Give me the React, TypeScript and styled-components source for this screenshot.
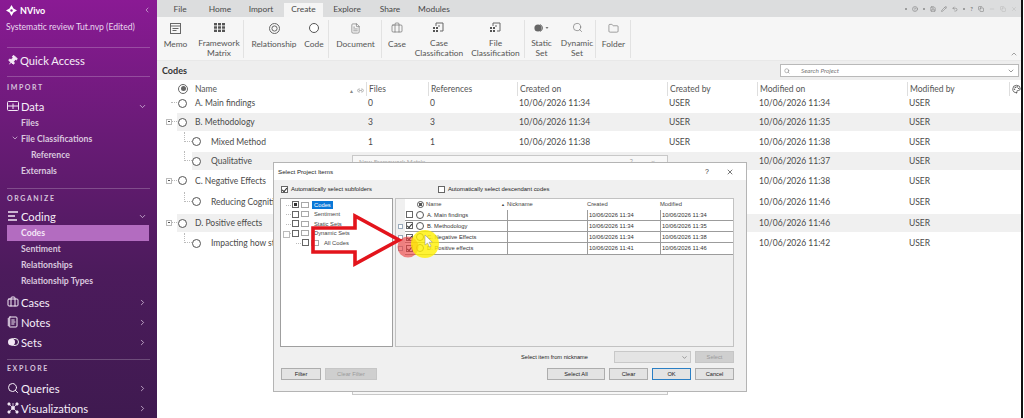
import React from 'react';
import styled, { createGlobalStyle } from 'styled-components';
import { Pin, Briefcase, ChevronDown, ChevronRight, ChevronLeft, ChevronUp, Search, FileText, Folder, X, Minus, Copy, HelpCircle, Save, Undo2, Pencil, Palette, NotebookText, Link2 } from 'lucide-react';

const Global = createGlobalStyle`
  html, body { margin: 0; padding: 0; width: 1024px; height: 418px; overflow: hidden; background: #fff; }
  body { font-family: Lato, "Open Sans", sans-serif; color: #444; }
  * { box-sizing: border-box; }
`;

const Page = styled.div`
  position: relative; width: 1024px; height: 418px; display: flex; overflow: hidden; background: #fff;
`;

/* ---------- sidebar ---------- */
const Sidebar = styled.aside`
  width: 157px; height: 418px; flex: none; color: #f3e8f5; overflow: hidden;
  background: linear-gradient(180deg, #8a1a94 0%, #6b1b78 30%, #4c1b5c 65%, #3f1a50 100%);
`;
const Brand = styled.div`
  height: 20px; padding: 0 6px; display: flex; align-items: center; gap: 3px;
  font-size: 9px; font-weight: 700; color: #fff;
`;
const BrandCollapse = styled.span` margin-left: auto; display: flex; color: #d9bfe0; `;
const ProjectName = styled.div`
  height: 14px; padding-left: 6px; font-size: 8.6px; line-height: 14px; white-space: nowrap; color: #e9d8ee;
`;
const Sep = styled.div<{ $mt: number }>`
  height: 1px; margin: ${p => p.$mt}px 7px 0; background: rgba(255,255,255,.22);
`;
const SectionLabel = styled.div<{ $h: number }>`
  height: ${p => p.$h}px; line-height: ${p => p.$h}px; padding-left: 7px;
  font-size: 7px; letter-spacing: 1.6px; font-weight: 700; color: #d6c3dc;
`;
const NavMain = styled.div<{ $h?: number; $mt?: number }>`
  height: ${p => p.$h ?? 20}px; margin-top: ${p => p.$mt ?? 0}px; padding: 0 10px 0 7px;
  display: flex; align-items: center; gap: 2px; font-size: 11.2px; color: #f6eef8;
  svg { flex: none; }
`;
const NavArrow = styled.span` margin-left: auto; display: flex; color: #dcc7e2; `;
const NavSub = styled.div<{ $indent?: number; $active?: boolean }>`
  height: 16px; line-height: 16px; margin: 0 8px 0 7px; padding-left: ${p => p.$indent ?? 14}px;
  font-size: 8.7px; font-weight: 700; position: relative; white-space: nowrap;
  color: ${p => (p.$active ? '#f4e6f7' : '#d9c7de')};
  background: ${p => (p.$active ? '#b36cc0' : 'transparent')};
`;
const SubCaret = styled.span` position: absolute; left: 4px; top: 3px; display: flex; color: #e6d6ea; `;

/* ---------- main ---------- */
const Main = styled.main` flex: 1; min-width: 0; margin-right: 1px; display: flex; flex-direction: column; border-right: 2px solid #111; `;
const TabBar = styled.div`
  height: 17px; background: #dcddde; display: flex; align-items: flex-end; padding-left: 1px; position: relative;
`;
const Tab = styled.div<{ $w: number; $active?: boolean }>`
  width: ${p => p.$w}px; height: 14px; line-height: 13px; text-align: center; font-size: 8.4px; color: #4a4a4a;
  background: ${p => (p.$active ? '#f5f5f5' : 'transparent')};
`;
const QuickTools = styled.div`
  margin-left: auto; height: 17px; display: flex; align-items: center; gap: 5px; padding-right: 4px; color: #777;
`;
const QuickDot = styled.span` width: 2px; height: 2px; background: #888; border-radius: 50%; `;
const QuickText = styled.span` font-size: 6px; color: #666; `;
const Ribbon = styled.div`
  height: 44px; background: #f6f6f6; display: flex; padding-top: 3px; position: relative; border-bottom: 1px solid #e8e8e8;
`;
const RibbonGroup = styled.div<{ $w: number }>`
  width: ${p => p.$w}px; height: 38px; display: flex; flex: none; border-right: 1px solid #e2e2e2;
`;
const RibbonItem = styled.div<{ $w: number }>`
  width: ${p => p.$w}px; display: flex; flex-direction: column; align-items: center; flex: none; color: #666;
`;
const RibbonIcon = styled.div` height: 16px; display: flex; align-items: center; justify-content: center; `;
const RibbonLabel = styled.div`
  margin-top: 3px; font-size: 8.4px; line-height: 10px; text-align: center; color: #555; white-space: nowrap;
`;
const RibbonCollapse = styled.span` position: absolute; right: 3px; bottom: 2px; display: flex; color: #777; `;
const TitleBar = styled.div`
  height: 19px; background: #eeeeee; display: flex; align-items: center; justify-content: space-between;
  padding: 0 2px 0 5px; font-size: 9px; font-weight: 700; color: #333;
`;
const SearchBox = styled.div`
  width: 239px; height: 13px; border: 1px solid #b9b9b9; background: #fff; display: flex; align-items: center;
  padding: 0 3px; font-size: 6.4px; font-weight: 400; font-style: italic; color: #777;
`;
const SearchText = styled.span` margin-left: 11px; `;
const SearchChevron = styled.span` margin-left: auto; display: flex; color: #666; `;

const Head = styled.div`
  height: 17px; background: #fff; display: grid; position: relative; align-items: center;
  grid-template-columns: 209px 62px 89px 150px 90px 150px 1fr 12px; font-size: 8.5px; color: #555;
`;
const HeadCell = styled.div<{ $first?: boolean }>`
  height: 14px; line-height: 14px; padding-left: ${p => (p.$first ? 38 : 2)}px; border-left: ${p => (p.$first ? 0 : 1)}px solid #dedede;
  display: flex; align-items: center; position: relative;
`;
const HeadAdd = styled.span`
  position: absolute; left: 21px; top: 2px; width: 10px; height: 10px; border: 1px solid #666; border-radius: 50%;
  &::after { content: ''; position: absolute; left: 1.5px; top: 1.5px; width: 5px; height: 5px; border-radius: 50%; background: #666; }
`;
const HeadSort = styled.span`
  position: absolute; right: 2px; top: 2px; display: flex; align-items: center; gap: 3px; font-size: 5px; color: #888;
`;
const Row = styled.div<{ $h: number; $left: number; $band?: boolean; $mt?: number }>`
  height: ${p => p.$h}px; margin-top: ${p => p.$mt ?? 0}px; margin-left: ${p => p.$left - 157}px;
  display: grid; align-items: center; position: relative; font-size: 8.5px; color: #4a4a4a;
  grid-template-columns: ${p => 368 - p.$left}px 62px 89px 150px 90px 150px 1fr;
  background: ${p => (p.$band ? '#f0f0f0' : 'transparent')};
`;
const NameCell = styled.div<{ $child?: boolean }>`
  display: flex; align-items: center; gap: ${p => (p.$child ? 10 : 8)}px; padding-left: ${p => (p.$child ? 0 : 1)}px; white-space: nowrap; overflow: hidden;
`;
const NodeCircle = styled.span<{ $s?: number }>`
  width: ${p => p.$s ?? 9}px; height: ${p => p.$s ?? 9}px; border-radius: 50%; flex: none; border: 1.4px solid #555; background: #fff;
`;
const TreeStem = styled.span<{ $x: number; $w: number; $tall?: boolean }>`
  position: absolute; left: ${p => p.$x}px; bottom: 50%; width: ${p => p.$w}px; height: ${p => (p.$tall ? 10 : 1)}px;
  border-bottom: 1px dotted #bbb; border-left: ${p => (p.$tall ? '1px dotted #bbb' : '0')};
`;
const Expander = styled.span`
  position: absolute; left: -11px; top: 50%; margin-top: -3px; width: 6px; height: 6px; border: 1px solid #bbb; background: #fff;
  &::after { content: ''; position: absolute; left: 1px; top: 1px; width: 2px; height: 1px; background: #555; }
`;

/* ---------- dialogs ---------- */
const BackFrame = styled.div`
  position: absolute; left: 352px; top: 155px; width: 316px; height: 240px; border: 1px solid #c8c8c8; background: #f7f7f7;
  display: flex; justify-content: space-between; padding: 2px 6px; font-size: 6.4px; color: #aaa;
`;
const BackTools = styled.span` display: flex; gap: 18px; padding-right: 6px; font-size: 7px; `;
const Dialog = styled.div`
  position: absolute; left: 273px; top: 162px; width: 474px; height: 230px; background: #f0f0f0;
  border: 1px solid #b4b4b4; display: flex; flex-direction: column; font-family: "Liberation Sans", Arial, sans-serif; color: #222; font-size: 5.8px;
`;
const DialogTitle = styled.div`
  height: 17px; flex: none; background: #fff; display: flex; align-items: center; justify-content: space-between; padding: 0 12px 0 4px; font-size: 6.2px;
`;
const DialogTools = styled.span` display: flex; align-items: center; gap: 17px; color: #333; font-size: 7px; `;
const OptionRow = styled.div` height: 18px; flex: none; display: flex; align-items: center; padding-left: 7px; gap: 66px; `;
const Option = styled.label` display: flex; align-items: center; gap: 3px; font-size: 5.9px; `;
const Check = styled.span<{ $checked?: boolean; $filled?: boolean; $s?: number }>`
  width: ${p => p.$s ?? 7}px; height: ${p => p.$s ?? 7}px; flex: none; border: 1px solid #666; background: #fff; position: relative; display: inline-block;
  ${p => p.$checked ? `&::after { content: ''; position: absolute; left: 1.4px; top: 0; width: 2.4px; height: 4px; border: solid #333; border-width: 0 1px 1px 0; transform: rotate(40deg); }` : ''}
  ${p => p.$filled ? `&::after { content: ''; position: absolute; left: 1px; top: 1px; right: 1px; bottom: 1px; background: #333; }` : ''}
`;
const Panes = styled.div` height: 149px; flex: none; display: flex; padding: 0 12px 0 6px; gap: 2px; `;
const TreePane = styled.div`
  width: 113px; flex: none; background: #fff; border: 1px solid #9f9f9f; padding-top: 1px; position: relative;
`;
const TreeLine = styled.div<{ $indent: number; $exp?: boolean }>`
  height: 9.5px; display: flex; align-items: center; gap: 2px; padding-left: ${p => p.$indent}px; font-size: 5.8px; color: #333; position: relative;
  &::before { content: ''; position: absolute; left: ${p => p.$indent - 6}px; top: 50%; width: 5px; border-top: 1px dotted #bbb; }
  ${p => p.$exp ? `&::after { content: ''; position: absolute; left: 2px; top: 2px; width: 5px; height: 5px; border: 1px solid #bbb; background: #fff; }` : ''}
`;
const FolderBox = styled.span` width: 8px; height: 6px; border: 1px solid #a8a8a8; background: #fff; flex: none; `;
const TreeText = styled.span<{ $sel?: boolean }>`
  margin-left: 1px; padding: 0 2px; line-height: 8.5px;
  background: ${p => (p.$sel ? '#0a78d7' : 'transparent')}; color: ${p => (p.$sel ? '#fff' : '#444')};
`;
const GridPane = styled.div`
  flex: 1; min-width: 0; border: 1px solid #c2c2c2; background: #f0f0f0; padding-left: 9px;
`;
const GridHead = styled.div`
  height: 10.5px; background: #fff; display: grid; align-items: center; grid-template-columns: 102px 80px 73px 1fr; font-size: 5.8px; color: #444;
`;
const GridHeadName = styled.span` display: flex; align-items: center; gap: 2px; padding-left: 12px; position: relative; `;
const GridAdd = styled.span`
  width: 7px; height: 7px; border: 1px solid #555; border-radius: 50%; background: radial-gradient(circle, #555 40%, #fff 45%);
`;
const GridSort = styled.span` position: absolute; right: 2px; font-size: 4px; `;
const GridRow = styled.div`
  height: 11.25px; background: #fff; display: grid; align-items: center; grid-template-columns: 102px 80px 73px 1fr; position: relative;
  border-bottom: 1px solid #9c9c9c; font-size: 5.8px; color: #333;
`;
const GridExpander = styled.span`
  position: absolute; left: -7px; top: 3px; width: 5px; height: 5px; border: 1px solid #9ab; background: #fff;
`;
const GridName = styled.span` display: flex; align-items: center; gap: 3px; padding-left: 1px; white-space: nowrap; overflow: hidden; height: 100%; `;
const GridCell = styled.span` height: 100%; display: flex; align-items: center; border-left: 1px solid #9c9c9c; padding-left: 1px; white-space: nowrap; `;
const PickRow = styled.div` height: 20px; flex: none; display: flex; align-items: center; justify-content: flex-end; padding: 0 12px 0 0; gap: 4px; `;
const PickLabel = styled.span` margin-right: 22px; font-size: 5.7px; `;
const Combo = styled.span`
  width: 77px; height: 12px; background: #e4e4e4; border: 1px solid #c8c8c8; display: flex; align-items: center; justify-content: flex-end; padding-right: 2px; color: #666;
`;
const Btn = styled.button<{ $w: number; $off?: boolean; $primary?: boolean }>`
  width: ${p => p.$w}px; height: 12px; padding: 0; font: inherit; font-size: 5.7px;
  background: ${p => (p.$off ? '#cfcfcf' : '#e3e3e3')}; color: ${p => (p.$off ? '#9a9a9a' : '#222')};
  border: 1px solid ${p => (p.$primary ? '#2b7fc4' : p.$off ? '#c6c6c6' : '#adadad')};
`;
const ButtonRow = styled.div` height: 12px; flex: none; margin-top: 1px; display: flex; padding: 0 12px 0 7px; gap: 4px; `;
const ButtonSpacer = styled.span` flex: 1; `;

const Annotation = styled.svg` position: absolute; left: 300px; top: 205px; width: 150px; height: 70px; pointer-events: none; `;

/* ---------- icons ---------- */
const Logo = () => (
  <svg width="11" height="11" viewBox="0 0 12 12"><path d="M6 0l2.2 3.8L12 6 8.2 8.2 6 12 3.8 8.2 0 6l3.8-2.2z" fill="#fff" /><circle cx="6" cy="6" r="1.3" fill="#8a1a94" /></svg>
);
const DataIcon = () => (
  <svg width="12" height="12" viewBox="0 0 12 12" fill="none" stroke="#f3e8f5"><rect x=".5" y="1.5" width="11" height="9" rx="1" /><path d="M.5 6h11M6 3.5V6M6 6v3" /></svg>
);
const CodingIcon = () => (
  <svg width="12" height="12" viewBox="0 0 12 12" stroke="#f3e8f5" strokeWidth="1.4"><path d="M1 2h10M1 6h7M1 10h9" /></svg>
);
const SetsIcon = () => (
  <svg width="12" height="10" viewBox="0 0 12 10"><rect x="3" y="1.5" width="8.5" height="7" rx="3.5" fill="none" stroke="#eee" /><circle cx="4.5" cy="5" r="3.5" fill="#f3e8f5" /></svg>
);
const VizIcon = () => (
  <svg width="12" height="12" viewBox="0 0 12 12" fill="#f3e8f5" stroke="#f3e8f5" strokeWidth=".8"><path d="M2 2l8 8M10 2l-8 8M6 6V1" /><circle cx="2" cy="2" r="1.2" /><circle cx="10" cy="2" r="1.2" /><circle cx="2" cy="10" r="1.2" /><circle cx="10" cy="10" r="1.2" /><circle cx="6" cy="6" r="1.5" /></svg>
);
const MemoIcon = () => (
  <svg width="11" height="11" viewBox="0 0 11 11" fill="none" stroke="#666"><rect x=".5" y=".5" width="10" height="10" /><path d="M.5 3h10M2.5 5.5h6M2.5 7.5h4" /></svg>
);
const MatrixIcon = () => (
  <svg width="11" height="9" viewBox="0 0 11 9" fill="#555"><rect width="3" height="2.4" /><rect x="4" width="3" height="2.4" /><rect x="8" width="3" height="2.4" /><rect y="3.3" width="3" height="2.4" /><rect x="4" y="3.3" width="3" height="2.4" /><rect x="8" y="3.3" width="3" height="2.4" /><rect y="6.6" width="3" height="2.4" /><rect x="4" y="6.6" width="3" height="2.4" /><rect x="8" y="6.6" width="3" height="2.4" /></svg>
);
const RelIcon = () => (
  <svg width="11" height="11" viewBox="0 0 11 11" fill="none" stroke="#666"><circle cx="5.5" cy="5.5" r="5" /><circle cx="5.5" cy="5.5" r="2.6" /></svg>
);
const ClassIcon = () => (
  <svg width="12" height="11" viewBox="0 0 12 11" fill="none" stroke="#666"><path d="M3 4V1h7v8H7" /><path d="M5 4h2" /><g fill="#555" stroke="none"><rect x="0" y="5" width="2" height="2" /><rect x="3" y="5" width="2" height="2" /><rect x="0" y="8" width="2" height="2" /><rect x="3" y="8" width="2" height="2" /></g></svg>
);
const StaticSetIcon = () => (
  <svg width="15" height="8" viewBox="0 0 15 8"><circle cx="4" cy="4" r="3.6" fill="#666" /><path d="M6 .6a3.6 3.6 0 0 1 0 6.8" fill="none" stroke="#666" /><path d="M11.5 3h3l-1.5 2z" fill="#777" /></svg>
);

type R = { name: string; left: number; h: number; mt?: number; files: number | string; refs: number | string; created: string; mod: string; band?: boolean; exp?: boolean; child?: boolean };
const rows: R[] = [
  { name: 'A. Main findings', left: 177, h: 12, files: 0, refs: 0, created: '10/06/2026 11:34', mod: '10/06/2026 11:34' },
  { name: 'B. Methodology', left: 177, h: 18, mt: 4, files: 3, refs: 3, created: '10/06/2026 11:34', mod: '10/06/2026 11:35', band: true, exp: true },
  { name: 'Mixed Method', left: 192, h: 21, files: 1, refs: 1, created: '10/06/2026 11:38', mod: '10/06/2026 11:38', child: true },
  { name: 'Qualitative', left: 192, h: 18, files: '', refs: '', created: '', mod: '10/06/2026 11:37', child: true, band: true },
  { name: 'C. Negative Effects', left: 177, h: 21, files: '', refs: '', created: '', mod: '10/06/2026 11:38', exp: true },
  { name: 'Reducing Cognitive', left: 192, h: 21, files: '', refs: '', created: '', mod: '10/06/2026 11:46', child: true },
  { name: 'D. Positive effects', left: 177, h: 18, mt: 2, files: '', refs: '', created: '', mod: '10/06/2026 11:46', band: true, exp: true },
  { name: 'Impacting how students', left: 192, h: 22, files: '', refs: '', created: '', mod: '10/06/2026 11:42', child: true },
];

const gridRows = [
  { name: 'A. Main findings', c: false, cr: '10/06/2026 11:34', md: '10/06/2026 11:34' },
  { name: 'B. Methodology', c: true, cr: '10/06/2026 11:34', md: '10/06/2026 11:35', exp: true },
  { name: 'C. Negative Effects', c: true, cr: '10/06/2026 11:34', md: '10/06/2026 11:38', exp: true },
  { name: 'D. Positive effects', c: true, cr: '10/06/2026 11:41', md: '10/06/2026 11:46', exp: true },
];

const tabs: [string, number, boolean?][] = [['File', 44], ['Home', 36], ['Import', 46], ['Create', 39, true], ['Explore', 48], ['Share', 38], ['Modules', 50]];

const ribbon: { w: number; items: { w: number; label: React.ReactNode; icon: React.ReactNode }[] }[] = [
  { w: 87, items: [
    { w: 37, label: 'Memo', icon: <MemoIcon /> },
    { w: 50, label: <>Framework<br />Matrix</>, icon: <MatrixIcon /> } ] },
  { w: 85, items: [
    { w: 60, label: 'Relationship', icon: <RelIcon /> },
    { w: 20, label: 'Code', icon: <NodeCircle $s={10} /> } ] },
  { w: 53, items: [{ w: 53, label: 'Document', icon: <FileText size={11} strokeWidth={1.3} /> }] },
  { w: 143, items: [
    { w: 30, label: 'Case', icon: <Briefcase size={12} strokeWidth={1.3} /> },
    { w: 54, label: <>Case<br />Classification</>, icon: <ClassIcon /> },
    { w: 59, label: <>File<br />Classification</>, icon: <ClassIcon /> } ] },
  { w: 71, items: [
    { w: 33, label: <>Static<br />Set</>, icon: <StaticSetIcon /> },
    { w: 38, label: <>Dynamic<br />Set</>, icon: <Search size={11} strokeWidth={1.3} /> } ] },
  { w: 35, items: [{ w: 35, label: 'Folder', icon: <Folder size={11} strokeWidth={1.3} /> }] },
];

export default function App() {
  return (
    <Page>
      <Global />
      <Sidebar>
        <Brand><Logo />NVivo<BrandCollapse><ChevronLeft size={8} /></BrandCollapse></Brand>
        <ProjectName>Systematic review Tut.nvp (Edited)</ProjectName>
        <Sep $mt={13} />
        <NavMain $h={24}><Pin size={11} fill="#f3e8f5" style={{ transform: 'rotate(40deg)' }} />Quick Access</NavMain>
        <Sep $mt={4} />
        <SectionLabel $h={20}>IMPORT</SectionLabel>
        <NavMain $h={18}><DataIcon />Data<NavArrow><ChevronDown size={9} /></NavArrow></NavMain>
        <NavSub>Files</NavSub>
        <NavSub><SubCaret><ChevronDown size={8} /></SubCaret>File Classifications</NavSub>
        <NavSub $indent={24}>Reference</NavSub>
        <NavSub>Externals</NavSub>
        <Sep $mt={9} />
        <SectionLabel $h={18}>ORGANIZE</SectionLabel>
        <NavMain $h={18}><CodingIcon />Coding<NavArrow><ChevronDown size={9} /></NavArrow></NavMain>
        <NavSub $active>Codes</NavSub>
        <NavSub>Sentiment</NavSub>
        <NavSub>Relationships</NavSub>
        <NavSub>Relationship Types</NavSub>
        <NavMain $mt={3}><Briefcase size={12} />Cases<NavArrow><ChevronRight size={9} /></NavArrow></NavMain>
        <NavMain><NotebookText size={12} />Notes<NavArrow><ChevronRight size={9} /></NavArrow></NavMain>
        <NavMain><SetsIcon />Sets<NavArrow><ChevronRight size={9} /></NavArrow></NavMain>
        <Sep $mt={7} />
        <SectionLabel $h={16}>EXPLORE</SectionLabel>
        <NavMain $mt={2}><Search size={12} />Queries<NavArrow><ChevronRight size={9} /></NavArrow></NavMain>
        <NavMain><VizIcon />Visualizations<NavArrow><ChevronRight size={9} /></NavArrow></NavMain>
      </Sidebar>
      <Main>
        <TabBar>
          {tabs.map(([t, w, a]) => <Tab key={t} $w={w} $active={a}>{t}</Tab>)}
          <QuickTools>
            <QuickDot /><HelpCircle size={6} /><QuickDot /><Save size={6} /><Pencil size={6} /><Undo2 size={6} /><QuickDot /><QuickText>?</QuickText>
            <Copy size={6} /><Minus size={6} color="#bbb" /><Copy size={6} color="#bbb" /><X size={6} color="#bbb" />
          </QuickTools>
        </TabBar>
        <Ribbon>
          {ribbon.map((g, i) => (
            <RibbonGroup key={i} $w={g.w}>
              {g.items.map((it, j) => (
                <RibbonItem key={j} $w={it.w}>
                  <RibbonIcon>{it.icon}</RibbonIcon>
                  <RibbonLabel>{it.label}</RibbonLabel>
                </RibbonItem>
              ))}
            </RibbonGroup>
          ))}
          <RibbonCollapse><ChevronUp size={8} /></RibbonCollapse>
        </Ribbon>
        <TitleBar>
          Codes
          <SearchBox><Search size={6} /><SearchText>Search Project</SearchText><SearchChevron><ChevronDown size={8} /></SearchChevron></SearchBox>
        </TitleBar>
        <Head>
          <HeadCell $first><HeadAdd />Name<HeadSort>▲<Link2 size={7} /></HeadSort></HeadCell>
          <HeadCell>Files</HeadCell>
          <HeadCell>References</HeadCell>
          <HeadCell>Created on</HeadCell>
          <HeadCell>Created by</HeadCell>
          <HeadCell>Modified on</HeadCell>
          <HeadCell>Modified by</HeadCell>
          <HeadCell><Palette size={10} color="#444" /></HeadCell>
        </Head>
        {rows.map(r => (
          <Row key={r.name} $h={r.h} $left={r.left} $band={r.band} $mt={r.mt}>
            {r.exp && <Expander />}
            <TreeStem $x={r.child ? -8 : -6} $w={r.child ? 8 : 6} $tall={r.child} />
            <NameCell $child={r.child}><NodeCircle />{r.name}</NameCell>
            <span>{r.files}</span>
            <span>{r.refs}</span>
            <span>{r.created}</span>
            <span>{r.created ? 'USER' : ''}</span>
            <span>{r.mod}</span>
            <span>USER</span>
          </Row>
        ))}
      </Main>

      <BackFrame>New Framework Matrix<BackTools><span>?</span><span>×</span></BackTools></BackFrame>
      <Dialog>
        <DialogTitle>Select Project Items<DialogTools><span>?</span><X size={8} /></DialogTools></DialogTitle>
        <OptionRow>
          <Option><Check $checked />Automatically select subfolders</Option>
          <Option><Check />Automatically select descendant codes</Option>
        </OptionRow>
        <Panes>
          <TreePane>
            <TreeLine $indent={11}><Check $filled /><FolderBox /><TreeText $sel>Codes</TreeText></TreeLine>
            <TreeLine $indent={11}><Check /><FolderBox /><TreeText>Sentiment</TreeText></TreeLine>
            <TreeLine $indent={11}><Check /><FolderBox /><TreeText>Static Sets</TreeText></TreeLine>
            <TreeLine $indent={11} $exp><Check /><FolderBox /><TreeText>Dynamic Sets</TreeText></TreeLine>
            <TreeLine $indent={21}><Check /><FolderBox /><TreeText>All Codes</TreeText></TreeLine>
          </TreePane>
          <GridPane>
            <GridHead>
              <GridHeadName><GridAdd />Name<GridSort>▲</GridSort></GridHeadName>
              <span>Nickname</span><span>Created</span><span>Modified</span>
            </GridHead>
            {gridRows.map(g => (
              <GridRow key={g.name}>
                {g.exp && <GridExpander />}
                <GridName><Check $checked={g.c} /><NodeCircle $s={8} />{g.name}</GridName>
                <GridCell />
                <GridCell>{g.cr}</GridCell>
                <GridCell>{g.md}</GridCell>
              </GridRow>
            ))}
          </GridPane>
        </Panes>
        <PickRow>
          <PickLabel>Select item from nickname</PickLabel>
          <Combo><ChevronDown size={7} /></Combo>
          <Btn $w={39} $off>Select</Btn>
        </PickRow>
        <ButtonRow>
          <Btn $w={40}>Filter</Btn>
          <Btn $w={52} $off>Clear Filter</Btn>
          <ButtonSpacer />
          <Btn $w={58}>Select All</Btn>
          <Btn $w={39}>Clear</Btn>
          <Btn $w={39} $primary>OK</Btn>
          <Btn $w={39}>Cancel</Btn>
        </ButtonRow>
      </Dialog>

      <Annotation viewBox="0 0 150 70">
        <circle cx="108" cy="42" r="10.5" fill="#ee3c3c" opacity=".62" />
        <circle cx="125" cy="39" r="14" fill="#fff000" opacity=".8" />
        <path d="M13 23H55V11L99 35 55 59V47H13Z" fill="none" stroke="#e3141c" strokeWidth="3.6" />
        <path d="M125 30v10l2.5-2 2 4 1.6-.8-2-4h3.2z" fill="#fff" stroke="#888" strokeWidth=".5" />
      </Annotation>
    </Page>
  );
}
